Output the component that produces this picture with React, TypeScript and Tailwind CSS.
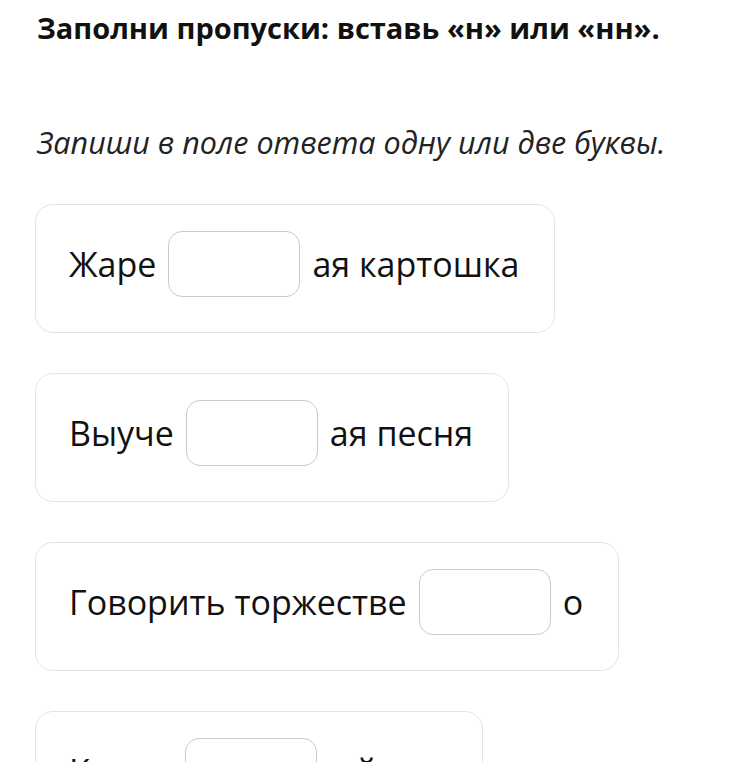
const items = [
  { before: 'Жаре', after: 'ая картошка' },
  { before: 'Выуче', after: 'ая песня' },
  { before: 'Говорить торжестве', after: 'о' },
  { before: 'Карма', after: 'ый вор' },
]

function Gap({ before, after }: { before: string; after: string }) {
  return (
    <div className="w-fit rounded-[18px] border-[1.5px] border-[#e4e4e4] bg-white pl-[33px] pr-[35px] pt-[26px] pb-[35px]">
      <div className="flex items-center gap-[12px] text-[34px] leading-none text-[#111]">
        <span>{before}</span>
        <input
          type="text"
          className="h-[66px] w-[132px] rounded-[14px] border-[1.5px] border-[#cbcbcb] bg-white outline-none"
        />
        <span>{after}</span>
      </div>
    </div>
  )
}

export default function App() {
  return (
    <div className="h-screen overflow-hidden bg-white px-[37px] pt-[7px] font-['Open_Sans',sans-serif]">
      <h1 className="text-[29px] font-bold leading-[42px] text-[#111]">
        Заполни пропуски: вставь «н» или «нн».
      </h1>
      <p className="mt-[72px] text-[30.5px] italic leading-[42px] text-[#222]">
        Запиши в поле ответа одну или две буквы.
      </p>
      <div className="mt-[41px] -ml-[2px] flex flex-col gap-[40px]">
        {items.map((it) => (
          <Gap key={it.before} before={it.before} after={it.after} />
        ))}
      </div>
    </div>
  )
}
